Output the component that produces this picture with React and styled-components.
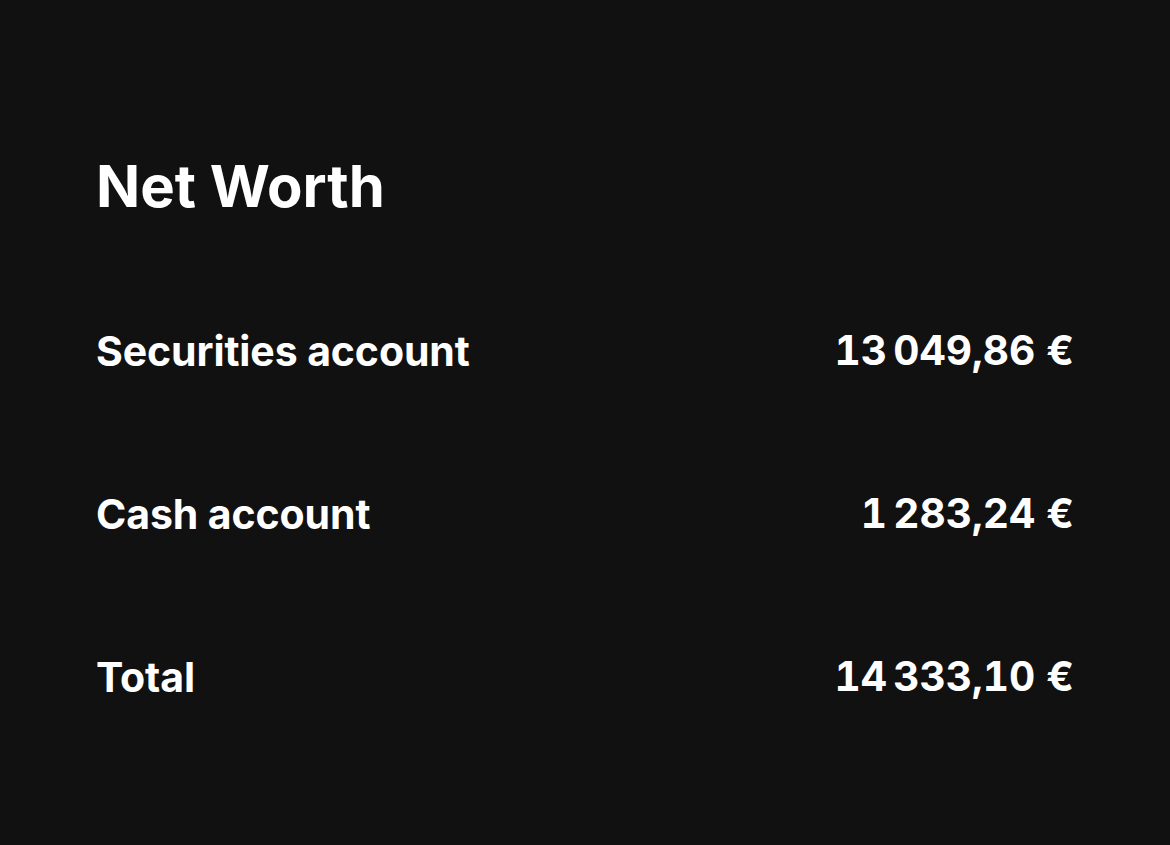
import React from "react";
import styled, { createGlobalStyle } from "styled-components";

const GlobalStyle = createGlobalStyle`
  html, body {
    margin: 0;
    padding: 0;
    background: #111111;
  }
  body {
    font-family: "Inter", "Liberation Sans", sans-serif;
    color: #ffffff;
    -webkit-font-smoothing: antialiased;
  }
`;

const Page = styled.div`
  min-height: 845px;
  box-sizing: border-box;
  padding: 152px 96px 0 96px;
  background: #111111;
`;

const Title = styled.h1`
  margin: 0;
  font-size: 58px;
  line-height: 68px;
  font-weight: 700;
`;

const List = styled.div`
  display: flex;
  flex-direction: column;
  margin-top: 49px;
`;

const Row = styled.div`
  display: flex;
  justify-content: space-between;
  align-items: center;
  height: 163px;
`;

const Label = styled.span`
  font-size: 41px;
  font-weight: 700;
  letter-spacing: -0.1px;
`;

const Amount = styled.span`
  font-size: 40.6px;
  font-weight: 700;
  font-variant-numeric: tabular-nums;
`;

const accounts = [
  { label: "Securities account", amount: 13049.86 },
  { label: "Cash account", amount: 1283.24 },
];

const formatEuro = (value) =>
  value
    .toFixed(2)
    .replace(".", ",")
    .replace(/\B(?=(\d{3})+(?!\d))/g, "\u202f") + " €";

function App() {
  const total = accounts.reduce((sum, a) => sum + a.amount, 0);

  return (
    <>
      <GlobalStyle />
      <Page>
        <Title>Net Worth</Title>
        <List>
          {accounts.map((a) => (
            <Row key={a.label}>
              <Label>{a.label}</Label>
              <Amount>{formatEuro(a.amount)}</Amount>
            </Row>
          ))}
          <Row>
            <Label>Total</Label>
            <Amount>{formatEuro(total)}</Amount>
          </Row>
        </List>
      </Page>
    </>
  );
}

export default App;
